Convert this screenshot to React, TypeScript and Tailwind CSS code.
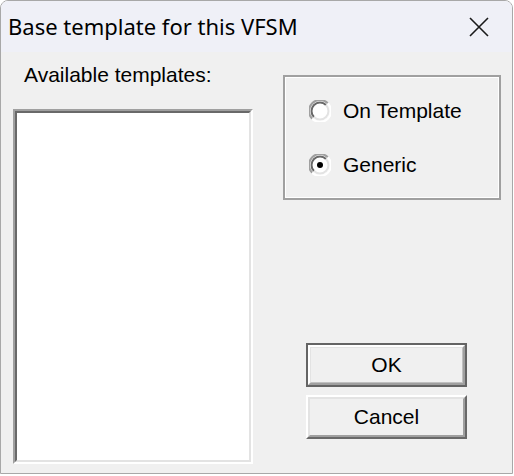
import type { ReactNode } from "react";

// classic win32 dialog, scaled ~150%
const UI = "font-['Liberation_Sans',Arial,sans-serif]";

function Radio({ checked, label }: { checked?: boolean; label: string }) {
  return (
    <div className="flex items-center h-[24px]">
      <svg width="22" height="22" viewBox="0 0 22 22" className="shrink-0">
        <circle cx="11" cy="11" r="10" fill="#ffffff" />
        {/* sunken rim: dark top-left, light bottom-right */}
        <path d="M3.2 18.8 A10 10 0 0 1 18.8 3.2" fill="none" stroke="#a0a0a0" strokeWidth="2" />
        <path d="M5 17 A8 8 0 0 1 17 5" fill="none" stroke="#696969" strokeWidth="2" />
        <path d="M18.8 3.2 A10 10 0 0 1 3.2 18.8" fill="none" stroke="#ffffff" strokeWidth="2" />
        <path d="M17 5 A8 8 0 0 1 5 17" fill="none" stroke="#e3e3e3" strokeWidth="2" />
        {checked && <circle cx="11" cy="11" r="3" fill="#000000" />}
      </svg>
      <span className={`${UI} ml-[12px] text-[21px] leading-[24px] text-black`}>{label}</span>
    </div>
  );
}

function Button({ children, isDefault }: { children: ReactNode; isDefault?: boolean }) {
  const label = <span className={`${UI} text-[21px] leading-[24px] text-black`}>{children}</span>;
  return (
    <div className={`w-[161px] h-[44px] ${isDefault ? "border-2 border-[#646464]" : ""}`}>
      {isDefault ? (
        <div className="border-2 border-t-white border-l-white border-r-[#a0a0a0] border-b-[#a0a0a0] h-full">
          <div className="border border-t-[#e3e3e3] border-l-[#e3e3e3] border-r-[#c0c0c0] border-b-[#c0c0c0] h-full flex items-center justify-center bg-[#f0f0f0]">
            {label}
          </div>
        </div>
      ) : (
        <div className="border-2 border-t-white border-l-white border-r-[#696969] border-b-[#696969] h-full">
          <div className="border-2 border-t-[#e3e3e3] border-l-[#e3e3e3] border-r-[#a0a0a0] border-b-[#a0a0a0] h-full flex items-center justify-center bg-[#f0f0f0]">
            {label}
          </div>
        </div>
      )}
    </div>
  );
}

export default function App() {
  return (
    <div className="w-[514px] h-[476px] bg-white">
      <div className="w-[513px] h-[474px] rounded-t-[8px] border border-[#a8a8a8] flex flex-col overflow-hidden">
        {/* Title bar */}
        <div className="h-[51px] bg-[#eff0f7] flex items-center pl-[7px] pr-[23px] shrink-0">
          <span className="font-['Noto_Sans',sans-serif] text-[22px] text-black leading-none flex-1 pb-[1px]">
            Base template for this VFSM
          </span>
          <svg width="20" height="20" viewBox="0 0 20 20" className="shrink-0">
            <path d="M1 1 L19 19 M19 1 L1 19" stroke="#1a1a1a" strokeWidth="1.6" fill="none" />
          </svg>
        </div>

        {/* Client area */}
        <div className="flex-1 bg-[#f0f0f0] flex pl-[12px]">
          <div className="flex flex-col w-[240px]">
            <span className={`${UI} text-[21px] leading-[24px] text-black pl-[11px] pt-[11px]`}>
              Available templates:
            </span>
            <div className="mt-[22px] h-[355px] border-2 border-t-[#a0a0a0] border-l-[#a0a0a0] border-r-white border-b-white">
              <div className="h-full border-2 border-t-[#696969] border-l-[#696969] border-r-[#e3e3e3] border-b-[#e3e3e3] bg-white" />
            </div>
          </div>

          <div className="flex flex-col ml-[30px]">
            {/* Group box (etched) */}
            <div className="mt-[23px] w-[218px] h-[125px] border-2 border-[#a0a0a0]">
              <div className="h-full border border-white flex flex-col pl-[23px] pt-[21px] gap-[30px]">
                <Radio label="On Template" />
                <Radio checked label="Generic" />
              </div>
            </div>

            <div className="ml-[23px] mt-[143px] flex flex-col gap-[8px]">
              <Button isDefault>OK</Button>
              <Button>Cancel</Button>
            </div>
          </div>
        </div>
      </div>
    </div>
  );
}
